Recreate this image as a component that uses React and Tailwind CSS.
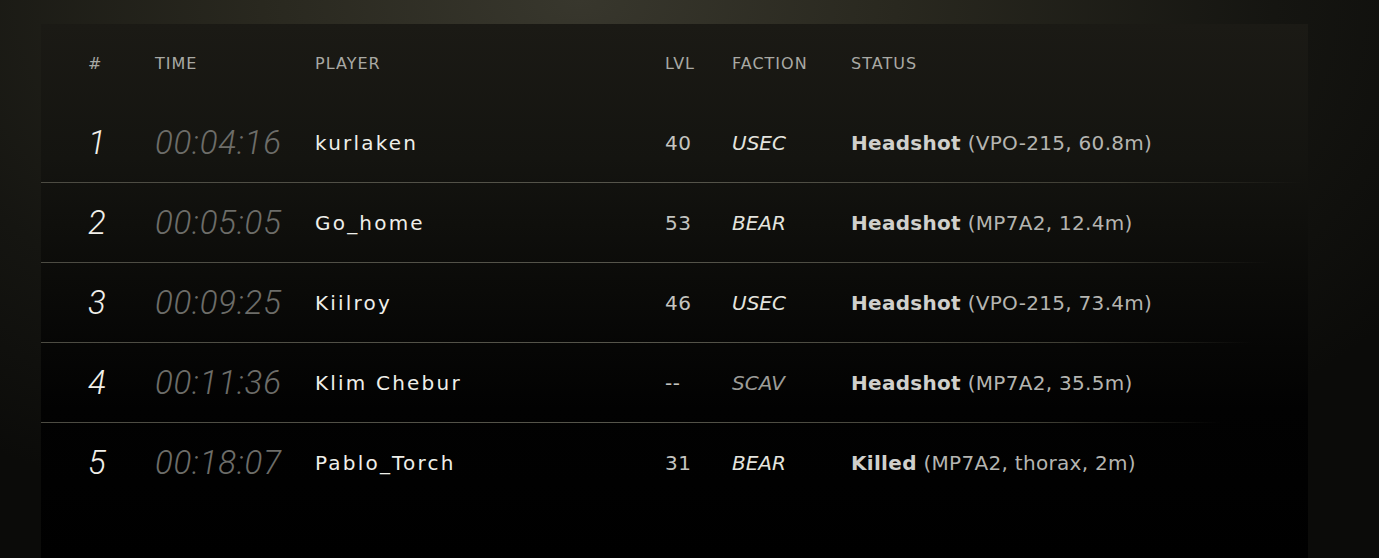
import React from "react";

const rows = [
  { n: "1", t: "00:04:16", p: "kurlaken", l: "40", f: "USEC", s: "Headshot", d: "(VPO-215, 60.8m)", line: "w-[1262px]" },
  { n: "2", t: "00:05:05", p: "Go_home", l: "53", f: "BEAR", s: "Headshot", d: "(MP7A2, 12.4m)", line: "w-[1230px]" },
  { n: "3", t: "00:09:25", p: "Kiilroy", l: "46", f: "USEC", s: "Headshot", d: "(VPO-215, 73.4m)", line: "w-[1212px]" },
  { n: "4", t: "00:11:36", p: "Klim Chebur", l: "--", f: "SCAV", s: "Headshot", d: "(MP7A2, 35.5m)", line: "w-[1180px]" },
  { n: "5", t: "00:18:07", p: "Pablo_Torch", l: "31", f: "BEAR", s: "Killed", d: "(MP7A2, thorax, 2m)", line: "" },
];

const grid = "grid grid-cols-[67px_160px_350px_67px_119px_1fr] items-center pl-[47px]";

export default function App() {
  return (
    <div className="w-[1379px] h-[558px] overflow-hidden pt-[24px] pl-[41px] bg-[radial-gradient(ellipse_72%_100%_at_42%_0%,#38372d_0%,#29281f_32%,#151511_70%,#0b0b09_100%)]">
      <div className="w-[1267px] h-[534px] bg-[linear-gradient(180deg,#1b1a15_0%,#141410_25%,#0a0a08_50%,#020202_72%,#000_100%)] font-['DejaVu_Sans','Liberation_Sans',sans-serif]">
        <div className={`${grid} h-[79px] pt-[1px] text-[16px] tracking-[1px] text-[#a9a9a4]`}>
          <div>#</div>
          <div>TIME</div>
          <div>PLAYER</div>
          <div>LVL</div>
          <div>FACTION</div>
          <div>STATUS</div>
        </div>
        {rows.map((r) => (
          <div key={r.n}>
            <div className={`${grid} h-[79px]`}>
              <div className="font-['Roboto','Liberation_Sans',sans-serif] text-[33px] italic font-light text-[#f1f0ea] leading-none">
                {r.n}
              </div>
              <div className="font-['Roboto','Liberation_Sans',sans-serif] text-[33px] italic font-light tracking-[0.8px] text-[#6d6d69] leading-none">
                {r.t}
              </div>
              <div className="text-[20px] tracking-[2.2px] text-[#efefea]">{r.p}</div>
              <div className="text-[20px] tracking-[0.5px] text-[#c4c4c0]">{r.l}</div>
              <div className={`text-[20px] italic ${r.f === "SCAV" ? "text-[#9c9c98]" : "text-[#e4e4df]"}`}>{r.f}</div>
              <div className="text-[20px] tracking-[0.3px] whitespace-nowrap">
                <span className="font-bold text-[#d0d0cc]">{r.s}</span>
                <span className="text-[#b5b5b1]"> {r.d}</span>
              </div>
            </div>
            {r.line ? (
              <div className={`h-px ${r.line} bg-[linear-gradient(90deg,#4c4b42_0%,#56554b_50%,#3f3e34_85%,transparent_100%)]`} />
            ) : null}
          </div>
        ))}
      </div>
    </div>
  );
}
